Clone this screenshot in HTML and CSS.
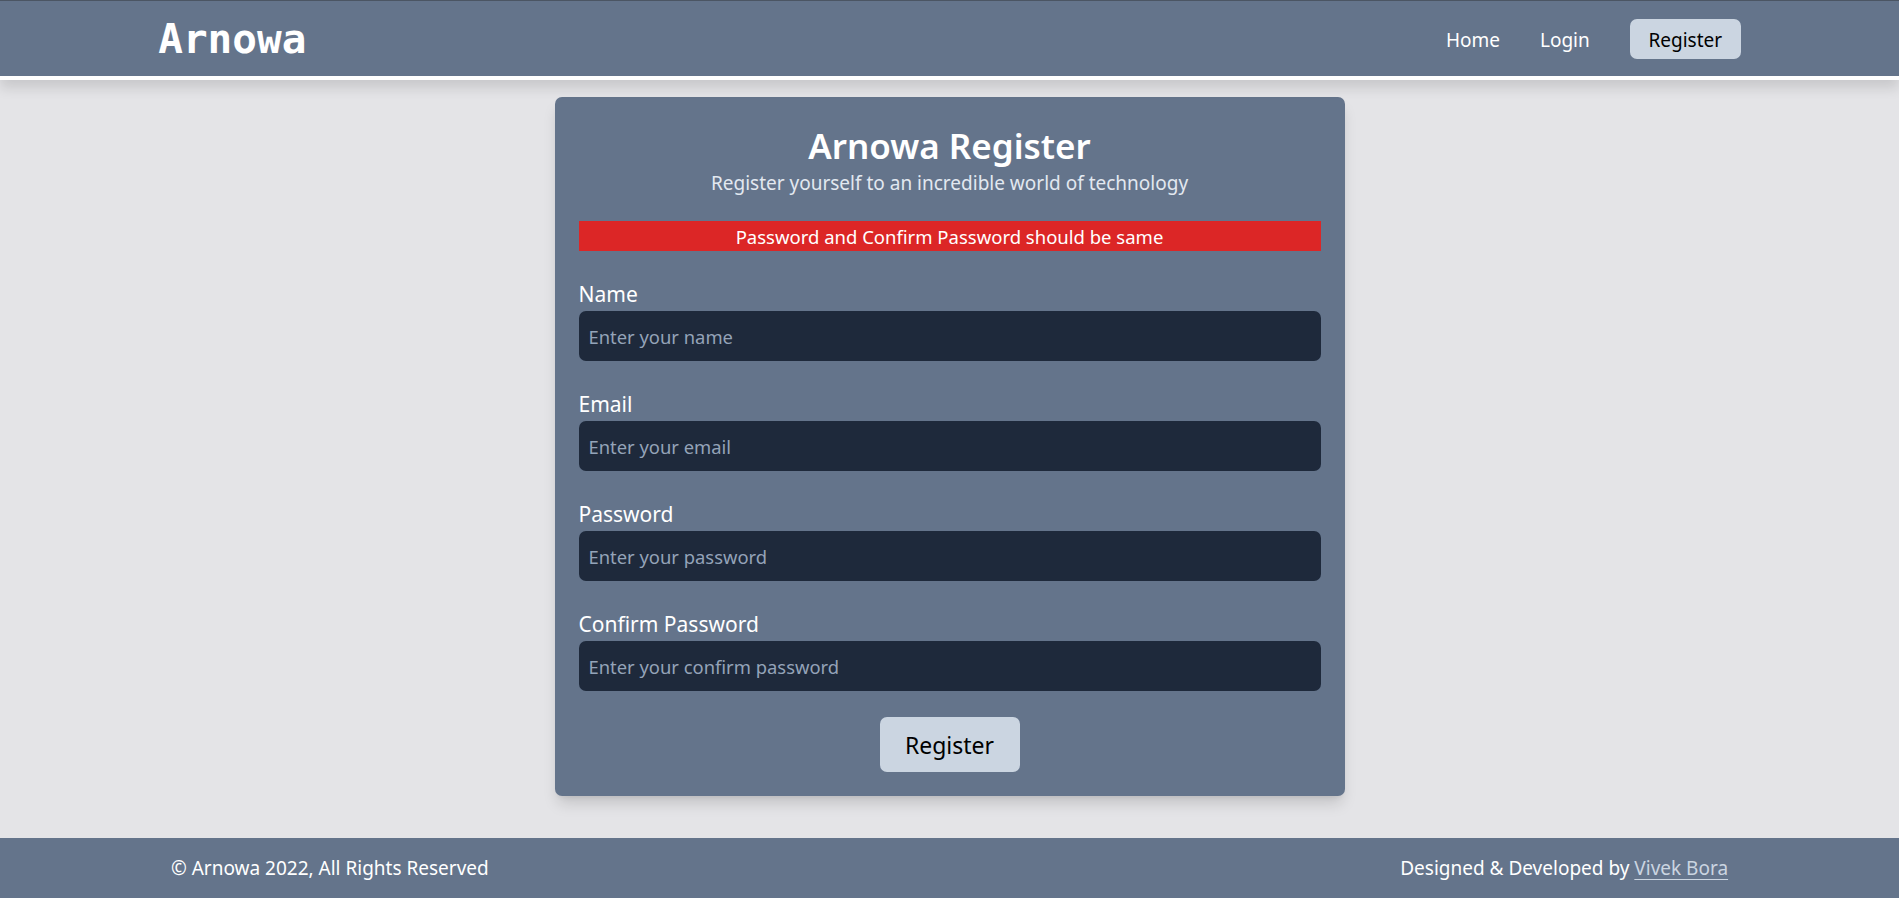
FILE: index.html
```html
<!DOCTYPE html>
<html lang="en">
<head>
<meta charset="utf-8">
<title>Arnowa Register</title>
<link rel="stylesheet" href="styles.css">
</head>
<body>
<header class="site-header">
  <div class="header-inner">
    <a class="logo" href="#">Arnowa</a>
    <nav class="nav">
      <a class="nav-link" href="#">Home</a>
      <a class="nav-link" href="#">Login</a>
      <a class="nav-btn" href="#">Register</a>
    </nav>
  </div>
</header>
<main class="main">
  <section class="card">
    <h1 class="card-title">Arnowa Register</h1>
    <p class="card-sub">Register yourself to an incredible world of technology</p>
    <div class="error">Password and Confirm Password should be same</div>
    <form class="form">
      <div class="field">
        <label class="label" for="name">Name</label>
        <input class="input" id="name" type="text" placeholder="Enter your name">
      </div>
      <div class="field">
        <label class="label" for="email">Email</label>
        <input class="input" id="email" type="email" placeholder="Enter your email">
      </div>
      <div class="field">
        <label class="label" for="pw">Password</label>
        <input class="input" id="pw" type="password" placeholder="Enter your password">
      </div>
      <div class="field">
        <label class="label" for="cpw">Confirm Password</label>
        <input class="input" id="cpw" type="password" placeholder="Enter your confirm password">
      </div>
      <div class="actions">
        <button class="submit" type="button">Register</button>
      </div>
    </form>
  </section>
</main>
<footer class="site-footer">
  <div class="footer-inner">
    <span>© Arnowa 2022, All Rights Reserved</span>
    <span>Designed &amp; Developed by <a class="footer-link" href="#">Vivek Bora</a></span>
  </div>
</footer>
</body>
</html>
```

FILE: styles.css
```css
* { box-sizing: border-box; }
html, body { margin: 0; padding: 0; }
body {
  font-family: "Noto Sans", "Open Sans", sans-serif;
  background: #e4e4e7;
  min-height: 100vh;
  display: flex;
  flex-direction: column;
  color: #fff;
}
a { text-decoration: none; color: inherit; }

.site-header {
  background: #64748b;
  border-top: 1px solid #4b5563;
  border-bottom: 4px solid #ffffff;
  box-shadow: 0 8px 12px rgba(0,0,0,0.12);
  position: relative;
  z-index: 2;
}
.header-inner {
  width: 83.3333%;
  margin: 0 auto;
  height: 75px;
  display: flex;
  align-items: center;
  justify-content: space-between;
}
.logo {
  font-family: "DejaVu Sans Mono", monospace;
  font-weight: bold;
  font-size: 41px;
  color: #fff;
  line-height: 1;
  margin-top: 2px;
}
.nav {
  display: flex;
  align-items: center;
}
.nav-link {
  font-size: 19px;
  color: #fff;
  margin-right: 40px;
  padding-top: 2px;
}
.nav-btn {
  font-size: 19px;
  color: #000;
  background: #cbd5e1;
  border-radius: 7px;
  height: 40px;
  width: 111px;
  padding-top: 2px;
  display: flex;
  align-items: center;
  justify-content: center;
}

.main {
  flex: 1;
  display: flex;
  justify-content: center;
  align-items: flex-start;
  padding-top: 17px;
  padding-bottom: 41px;
}
.card {
  width: 790px;
  background: #64748b;
  border-radius: 7px;
  box-shadow: 0 10px 15px -3px rgba(0,0,0,0.15), 0 4px 6px -4px rgba(0,0,0,0.1);
  padding: 27px 24px 24px;
}
.card-title {
  margin: 0;
  text-align: center;
  font-size: 35px;
  font-weight: 600;
  line-height: 44px;
}
.card-sub {
  margin: 2px 0 0;
  text-align: center;
  font-size: 19px;
  line-height: 26px;
  color: #e2e8f0;
}
.error {
  margin-top: 25px;
  background: #dc2626;
  height: 30px;
  display: flex;
  align-items: center;
  justify-content: center;
  font-size: 18.5px;
  color: #fff;
}
.form {
  display: flex;
  flex-direction: column;
  gap: 32px;
  margin-top: 32px;
}
.field {
  display: flex;
  flex-direction: column;
}
.label {
  font-size: 21px;
  line-height: 23px;
  padding-bottom: 5px;
  color: #fff;
}
.input {
  height: 50px;
  border: none;
  border-radius: 7px;
  background: #1e293b;
  color: #fff;
  padding: 0 10px;
  font-family: inherit;
  font-size: 18.4px;
  outline: none;
}
.input::placeholder { color: #94a3b8; }
.actions {
  display: flex;
  justify-content: center;
  margin-top: -6px;
}
.submit {
  width: 140px;
  height: 55px;
  border: none;
  border-radius: 7px;
  background: #cbd5e1;
  color: #000;
  font-family: inherit;
  font-size: 23px;
  cursor: pointer;
}

.site-footer {
  background: #64748b;
  height: 60px;
}
.footer-inner {
  width: 82%;
  margin: 0 auto;
  height: 100%;
  display: flex;
  align-items: center;
  justify-content: space-between;
  font-size: 19px;
  color: #fff;
}
.footer-link {
  color: #cbd5e1;
  text-decoration: underline;
  text-underline-offset: 4px;
}
```
